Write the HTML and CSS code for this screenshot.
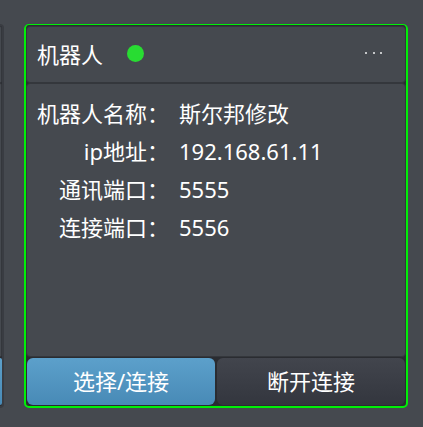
FILE: index.html
```
<!DOCTYPE html>
<html lang="zh-CN">
<head>
  <meta charset="UTF-8">
  <meta name="viewport" content="width=device-width, initial-scale=1.0">
  <title>机器人</title>
  <link rel="stylesheet" href="styles.css">
</head>
<body>
  <main class="robot-list">
    <!-- Previous card, scrolled out to the left -->
    <div class="card card-prev">
      <div class="card-header"></div>
      <div class="card-body"></div>
      <div class="card-footer"><div class="edge"></div></div>
    </div>

    <!-- Selected robot -->
    <section class="card selected">
      <header class="card-header">
        <span class="title">机器人</span>
        <span class="status"></span>
        <button class="more-btn" type="button" aria-label="更多">
          <svg width="18" height="4" viewBox="0 0 18 4" fill="#c4c6c8">
            <rect x="0" y="1" width="2" height="2"/>
            <rect x="8" y="1" width="2" height="2"/>
            <rect x="15" y="1" width="2" height="2"/>
          </svg>
        </button>
      </header>

      <dl class="card-body">
        <dt>机器人名称：</dt>
        <dd>斯尔邦修改</dd>
        <dt>ip地址：</dt>
        <dd>192.168.61.11</dd>
        <dt>通讯端口：</dt>
        <dd>5555</dd>
        <dt>连接端口：</dt>
        <dd>5556</dd>
      </dl>

      <footer class="card-footer">
        <button class="btn btn-primary" type="button">选择/连接</button>
        <button class="btn" type="button">断开连接</button>
      </footer>
    </section>
  </main>
</body>
</html>
```
FILE: styles.css
```
* {
  box-sizing: border-box;
}

body {
  margin: 0;
  background: #45494f;
  color: #fff;
  font-family: "Noto Sans", "Noto Sans CJK SC", sans-serif;
  font-size: 22px;
}

.robot-list {
  display: grid;
  grid-template-columns: 4px 1fr;
  gap: 20px;
  height: 100vh;
  padding: 24px 15px 19px 0;
}

.card {
  display: flex;
  flex-direction: column;
  min-width: 0;
  border: 2px solid #393c42;
  border-radius: 5px;
  background: #2a2c31;
}

.card.selected {
  border-color: #00f008;
  border-top-width: 1px;
  padding-top: 1px;
}

.card-prev {
  border-left: none;
  border-radius: 0 5px 5px 0;
}

.card-header {
  display: flex;
  align-items: center;
  height: 57px;
  padding: 0 22px 3px 10px;
  background: #45494f;
  border: 1px solid #34373c;
  border-radius: 4px;
}

.status {
  width: 17px;
  height: 17px;
  margin-left: 24px;
  border-radius: 50%;
  background: #28dc32;
}

.more-btn {
  display: flex;
  margin-left: auto;
  padding: 0;
  border: none;
  background: none;
  cursor: pointer;
}

.card-body {
  display: grid;
  grid-template-columns: max-content 1fr;
  grid-auto-rows: 38px;
  align-items: center;
  gap: 0 10px;
  flex: 1;
  margin: 0;
  padding: 10px;
  line-height: 38px;
  background: #45494f;
  border: 1px solid #34373c;
  border-radius: 4px;
}

.card-body dt {
  text-align: right;
}

.card-body dd {
  margin: 0;
}

.card-footer {
  display: flex;
  gap: 2px;
  height: 49px;
  padding: 1px;
}

.btn {
  flex: 1;
  padding: 0 0 3px;
  border: none;
  border-radius: 6px;
  background: linear-gradient(#42454d, #33363e);
  color: #fff;
  font: inherit;
  cursor: pointer;
}

.btn-primary {
  background: linear-gradient(#5ca0cb, #488ab6);
}

.card-prev .card-header,
.card-prev .card-body {
  padding: 0;
  border-left: none;
  border-radius: 0 4px 4px 0;
}

.card-prev .card-footer {
  padding: 1px 0;
}

.edge {
  flex: 1;
  border-radius: 0 4px 4px 0;
  background: linear-gradient(#5ca0cb, #488ab6);
}
```
